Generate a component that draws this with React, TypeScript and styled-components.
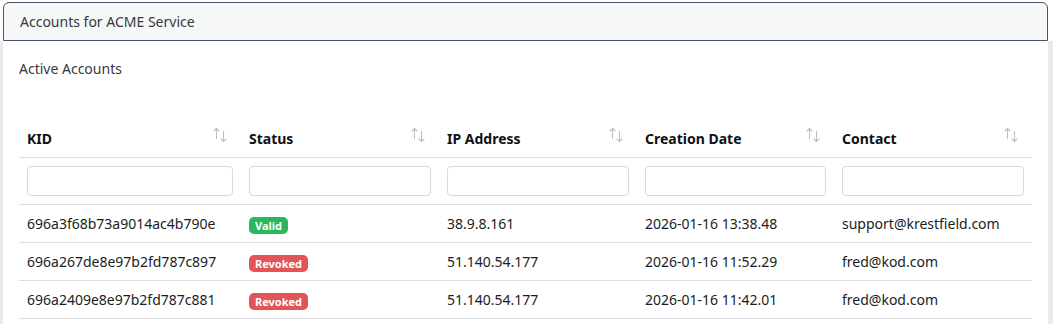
import styled, { createGlobalStyle } from 'styled-components';

type Account = {
  kid: string;
  status: 'Valid' | 'Revoked';
  ip: string;
  created: string;
  contact: string;
};

const ACCOUNTS: Account[] = [
  { kid: '696a3f68b73a9014ac4b790e', status: 'Valid', ip: '38.9.8.161', created: '2026-01-16 13:38.48', contact: 'support@krestfield.com' },
  { kid: '696a267de8e97b2fd787c897', status: 'Revoked', ip: '51.140.54.177', created: '2026-01-16 11:52.29', contact: 'fred@kod.com' },
  { kid: '696a2409e8e97b2fd787c881', status: 'Revoked', ip: '51.140.54.177', created: '2026-01-16 11:42.01', contact: 'fred@kod.com' },
];

const COLUMNS = [
  { label: 'KID', width: 222 },
  { label: 'Status', width: 198 },
  { label: 'IP Address', width: 198 },
  { label: 'Creation Date', width: 197 },
  { label: 'Contact', width: 198 },
];

const GlobalStyle = createGlobalStyle`
  body {
    margin: 0;
    background: #fff;
    font-family: "Noto Sans", "Open Sans", sans-serif;
    color: #212529;
  }
`;

const SortIcon = () => (
  <svg width="14" height="16" viewBox="0 0 14 16" fill="none" stroke="#bcc0c4" strokeWidth="1.1" strokeLinecap="round" strokeLinejoin="round">
    {/* стрелка вверх слева, вниз справа */}
    <path d="M3.5 1.5v10M1 4l2.5-2.5L6 4" />
    <path d="M10.5 4.5v10M8 12l2.5 2.5L13 12" />
  </svg>
);

export default function App() {
  return (
    <>
      <GlobalStyle />
      <Page>
        <Header>Accounts for ACME Service</Header>
        <Body>
          <Subtitle>Active Accounts</Subtitle>
          <Table>
            <colgroup>
              {COLUMNS.map((c) => (
                <col key={c.label} style={{ width: c.width }} />
              ))}
            </colgroup>
            <thead>
              <tr>
                {COLUMNS.map((c) => (
                  <HeadCell key={c.label}>
                    <HeadInner>
                      <span>{c.label}</span>
                      <SortIcon />
                    </HeadInner>
                  </HeadCell>
                ))}
              </tr>
              <tr>
                {COLUMNS.map((c) => (
                  <FilterCell key={c.label}>
                    <FilterInput type="text" aria-label={`Filter ${c.label}`} />
                  </FilterCell>
                ))}
              </tr>
            </thead>
            <tbody>
              {ACCOUNTS.map((a) => (
                <tr key={a.kid}>
                  <Cell>{a.kid}</Cell>
                  <Cell>
                    <Badge $valid={a.status === 'Valid'}>{a.status}</Badge>
                  </Cell>
                  <Cell>{a.ip}</Cell>
                  <Cell>{a.created}</Cell>
                  <Cell>{a.contact}</Cell>
                </tr>
              ))}
            </tbody>
          </Table>
        </Body>
      </Page>
    </>
  );
}

const Page = styled.div`
  padding-top: 2px;
  width: 1053px;
  box-sizing: border-box;
`;

const Header = styled.div`
  margin: 0 5px 0 3px;
  height: 39px;
  box-sizing: border-box;
  border: 1px solid #4a5467;
  border-radius: 6px 6px 0 0;
  background: #f6f7f7;
  padding-left: 16px;
  display: flex;
  align-items: center;
  font-size: 14px;
  color: #343a40;
`;

const Body = styled.div`
  border-left: 3px solid #e8eaed;
  border-right: 5px solid #e8eaed;
  padding: 18px 13px 0 16px;
  height: 283px;
  box-sizing: border-box;
`;

const Subtitle = styled.div`
  font-size: 14px;
  line-height: 20px;
  color: #343a40;
  margin-bottom: 42px;
`;

const Table = styled.table`
  width: 1013px;
  border-collapse: collapse;
  table-layout: fixed;
  font-size: 14px;
`;

const HeadCell = styled.th`
  padding: 8px;
  line-height: 20px;
  text-align: left;
  font-weight: 700;
  color: #111;
  border-bottom: 1px solid #dcdee1;
`;

const HeadInner = styled.div`
  display: flex;
  align-items: center;
  justify-content: space-between;
  padding-right: 6px;

  svg {
    margin-top: -8px;
  }
`;

const FilterCell = styled.td`
  padding: 8px;
  border-bottom: 1px solid #dcdee1;
`;

const FilterInput = styled.input`
  display: block;
  width: 100%;
  height: 30px;
  box-sizing: border-box;
  border: 1px solid #d6d9dd;
  border-radius: 4px;
  background: #fff;
  outline: none;
`;

const Cell = styled.td`
  padding: 8px;
  line-height: 21px;
  color: #1a1d21;
  border-bottom: 1px solid #dcdee1;
  white-space: nowrap;
`;

const Badge = styled.span<{ $valid: boolean }>`
  display: inline-block;
  padding: 0 6px;
  line-height: 17px;
  border-radius: 5px;
  font-size: 11px;
  font-weight: 700;
  color: #fff;
  background: ${({ $valid }) => ($valid ? '#2bb75a' : '#e35457')};
  vertical-align: middle;
`;
